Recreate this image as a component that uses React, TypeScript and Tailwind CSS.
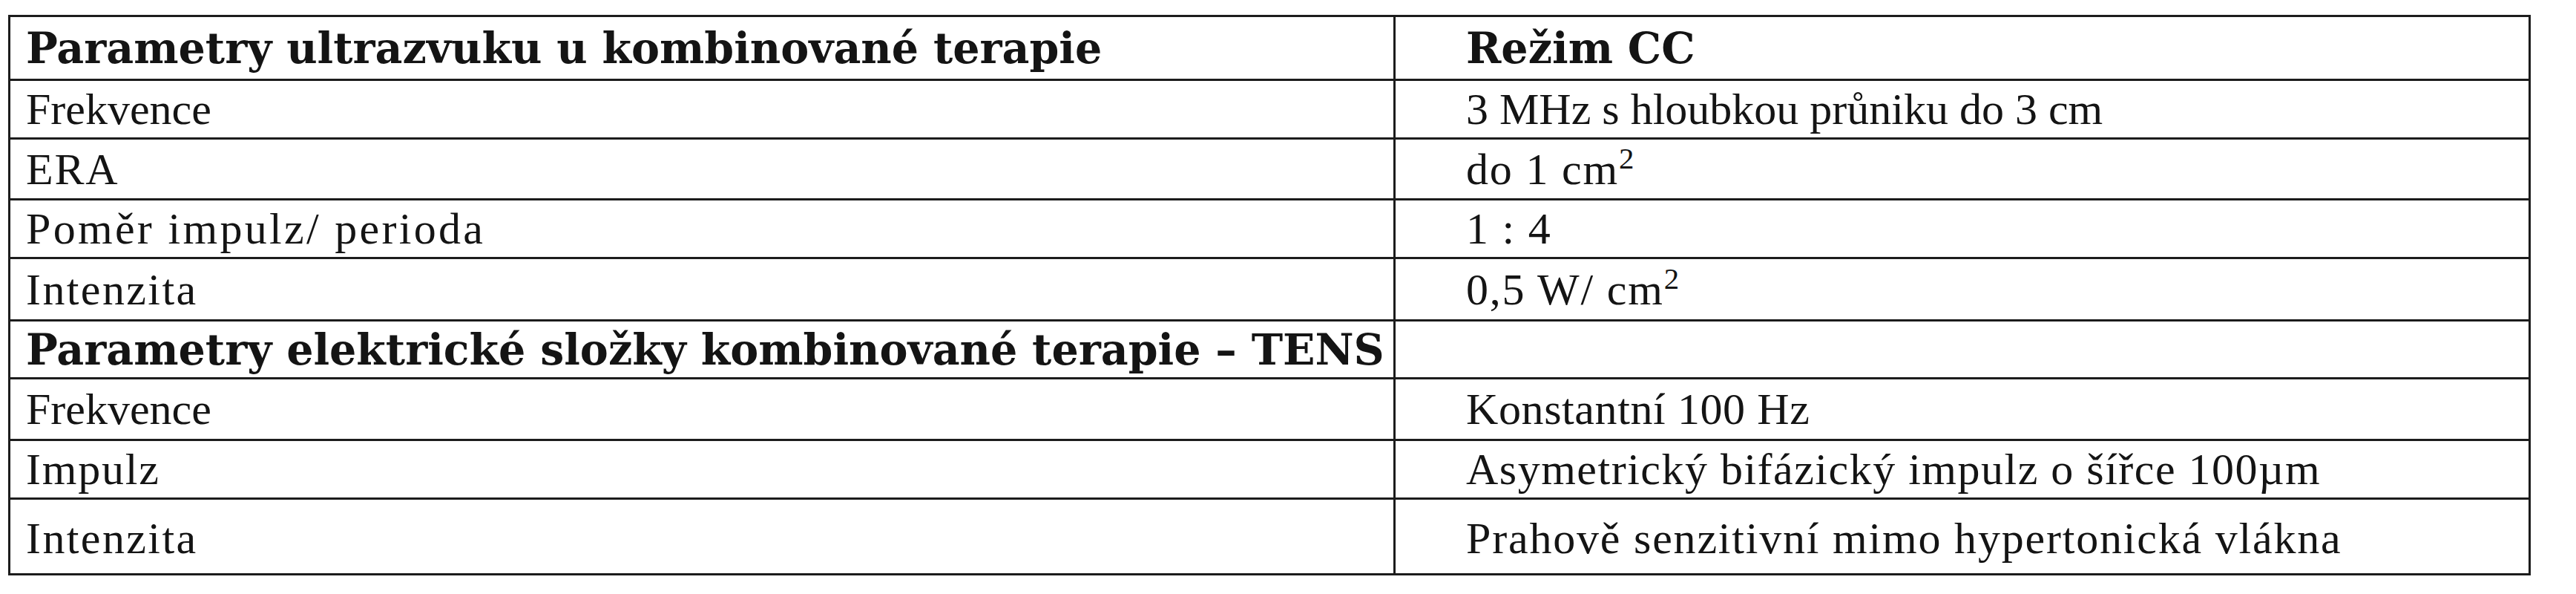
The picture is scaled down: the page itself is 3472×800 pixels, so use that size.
import React from "react";

type Row = {
  l: React.ReactNode;
  r: React.ReactNode;
  h: string;
  bold?: boolean;
  last?: boolean;
  lt?: string;
  rt?: string;
};

const Sq = () => <sup className="text-[0.68em]">2</sup>;

const rows: Row[] = [
  { l: "Parametry ultrazvuku u kombinované terapie", r: "Režim CC", h: "h-[86px]", bold: true },
  { l: "Frekvence", r: "3 MHz s hloubkou průniku do 3 cm", h: "h-[79px]", lt: "tracking-normal", rt: "tracking-normal" },
  { l: "ERA", r: <>do 1 cm<Sq /></>, h: "h-[82px]" },
  { l: "Poměr impulz/ perioda", r: "1 : 4", h: "h-[79px]", lt: "tracking-[0.055em]" },
  { l: "Intenzita", r: <>0,5 W/ cm<Sq /></>, h: "h-[84px]", lt: "tracking-[0.04em]" },
  { l: "Parametry elektrické složky kombinované terapie – TENS", r: "", h: "h-[78px]", bold: true },
  { l: "Frekvence", r: "Konstantní 100 Hz", h: "h-[83px]", lt: "tracking-normal", rt: "tracking-[0.01em]" },
  { l: "Impulz", r: "Asymetrický bifázický impulz o šířce 100µm", h: "h-[79px]", rt: "tracking-[0.025em]" },
  { l: "Intenzita", r: "Prahově senzitivní mimo hypertonická vlákna", h: "h-[99px]", last: true, lt: "tracking-[0.04em]" },
];

export default function App() {
  return (
    <div className="w-[3472px] h-[800px] bg-white pt-[20px] pl-[11px] text-[#141414] font-['Liberation_Serif',serif] text-[60px] leading-none">
      <div className="w-[3400px] border-[3px] border-[#1c1c1c] flex flex-col">
        {rows.map((row, i) => {
          const txt = row.bold
            ? "font-['DejaVu_Serif',serif] font-bold text-[57px]"
            : "tracking-[0.03em]";
          const align = row.last ? "items-start pt-[22px]" : "items-center";
          return (
            <div
              key={i}
              className={`flex ${row.h} ${row.last ? "" : "border-b-[3px] border-[#1c1c1c]"}`}
            >
              <div
                className={`w-[1867px] shrink-0 border-r-[3px] border-[#1c1c1c] pl-[21px] flex ${align} ${txt}`}
              >
                <span className={row.lt ?? ""}>{row.l}</span>
              </div>
              <div className={`flex-1 pl-[95px] flex ${align} ${txt}`}>
                <span className={row.rt ?? ""}>{row.r}</span>
              </div>
            </div>
          );
        })}
      </div>
    </div>
  );
}
